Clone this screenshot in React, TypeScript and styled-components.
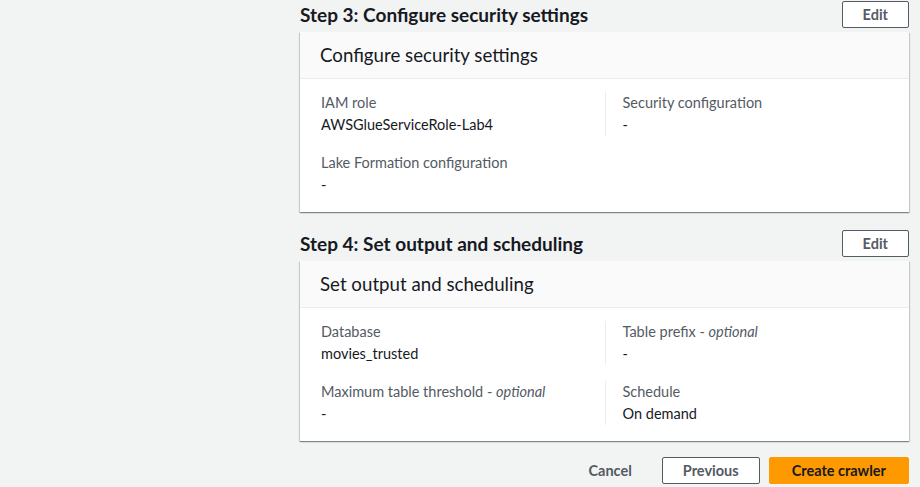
import React from "react";
import styled, { createGlobalStyle } from "styled-components";

const GlobalStyle = createGlobalStyle`
  body {
    margin: 0;
    background: #f2f3f3;
    font-family: Lato, "Open Sans", Arial, sans-serif;
    color: #16191f;
  }
`;

const Page = styled.div`
  width: 609px;
  padding: 1px 0 0 300px;
  display: flex;
  flex-direction: column;
`;

const StepHeader = styled.div<{ $first?: boolean }>`
  display: flex;
  justify-content: space-between;
  align-items: center;
  margin-top: ${(p) => (p.$first ? "0" : "18px")};
  margin-bottom: 4px;
`;

const StepTitle = styled.h2`
  margin: 0;
  font-size: 19px;
  font-weight: 700;
  color: #16191f;
  line-height: 22px;
`;

const Button = styled.button<{ $variant?: "normal" | "primary" | "link" }>`
  height: 27px;
  padding: 0 ${(p) => (p.$variant === "primary" ? "22px" : "20px")};
  border-radius: 2px;
  font-family: inherit;
  font-size: 14.5px;
  font-weight: 700;
  cursor: pointer;
  border: 1px solid
    ${(p) =>
      p.$variant === "primary"
        ? "#ff9900"
        : p.$variant === "link"
        ? "transparent"
        : "#545b64"};
  background: ${(p) => (p.$variant === "primary" ? "#ff9900" : p.$variant === "link" ? "transparent" : "#fff")};
  color: ${(p) => (p.$variant === "primary" ? "#16191f" : "#545b64")};
`;

const Card = styled.div`
  background: #fff;
  box-shadow: 0 1px 1px 0 rgba(0, 28, 36, 0.3), 1px 1px 1px 0 rgba(0, 28, 36, 0.15),
    -1px 1px 1px 0 rgba(0, 28, 36, 0.15);
`;

const CardHeader = styled.div`
  height: 46px;
  display: flex;
  align-items: center;
  padding: 0 20px;
  background: #fafafa;
  border-bottom: 1px solid #eaeded;
  font-size: 18.7px;
  color: #16191f;
`;

const CardBody = styled.div`
  display: grid;
  grid-template-columns: 1fr 1fr;
  row-gap: 16px;
  padding: 13px 20px 16px;
`;

const Field = styled.div<{ $divider?: boolean }>`
  border-left: 1px solid ${(p) => (p.$divider ? "#eaeded" : "transparent")};
  padding-left: ${(p) => (p.$divider ? "17px" : "0")};
`;

const Label = styled.div`
  font-size: 14.5px;
  line-height: 22px;
  color: #545b64;

  i {
    font-style: italic;
  }
`;

const Value = styled.div`
  font-size: 14.5px;
  line-height: 22px;
  color: #16191f;
`;

const Footer = styled.div`
  display: flex;
  justify-content: flex-end;
  gap: 9px;
  margin-top: 16px;
`;

type Item = { label: React.ReactNode; value: string };

function Section({
  step,
  title,
  items,
  first,
}: {
  step: number;
  title: string;
  items: Item[];
  first?: boolean;
}) {
  return (
    <>
      <StepHeader $first={first}>
        <StepTitle>
          Step {step}: {title}
        </StepTitle>
        <Button>Edit</Button>
      </StepHeader>
      <Card>
        <CardHeader>{title}</CardHeader>
        <CardBody>
          {items.map((it, i) => (
            <Field key={i} $divider={i % 2 === 1}>
              <Label>{it.label}</Label>
              <Value>{it.value}</Value>
            </Field>
          ))}
        </CardBody>
      </Card>
    </>
  );
}

export default function App() {
  return (
    <>
      <GlobalStyle />
      <Page>
        <Section
          first
          step={3}
          title="Configure security settings"
          items={[
            { label: "IAM role", value: "AWSGlueServiceRole-Lab4" },
            { label: "Security configuration", value: "-" },
            { label: "Lake Formation configuration", value: "-" },
          ]}
        />
        <Section
          step={4}
          title="Set output and scheduling"
          items={[
            { label: "Database", value: "movies_trusted" },
            {
              label: (
                <>
                  Table prefix - <i>optional</i>
                </>
              ),
              value: "-",
            },
            {
              label: (
                <>
                  Maximum table threshold - <i>optional</i>
                </>
              ),
              value: "-",
            },
            { label: "Schedule", value: "On demand" },
          ]}
        />
        <Footer>
          <Button $variant="link">Cancel</Button>
          <Button>Previous</Button>
          <Button $variant="primary">Create crawler</Button>
        </Footer>
      </Page>
    </>
  );
}
